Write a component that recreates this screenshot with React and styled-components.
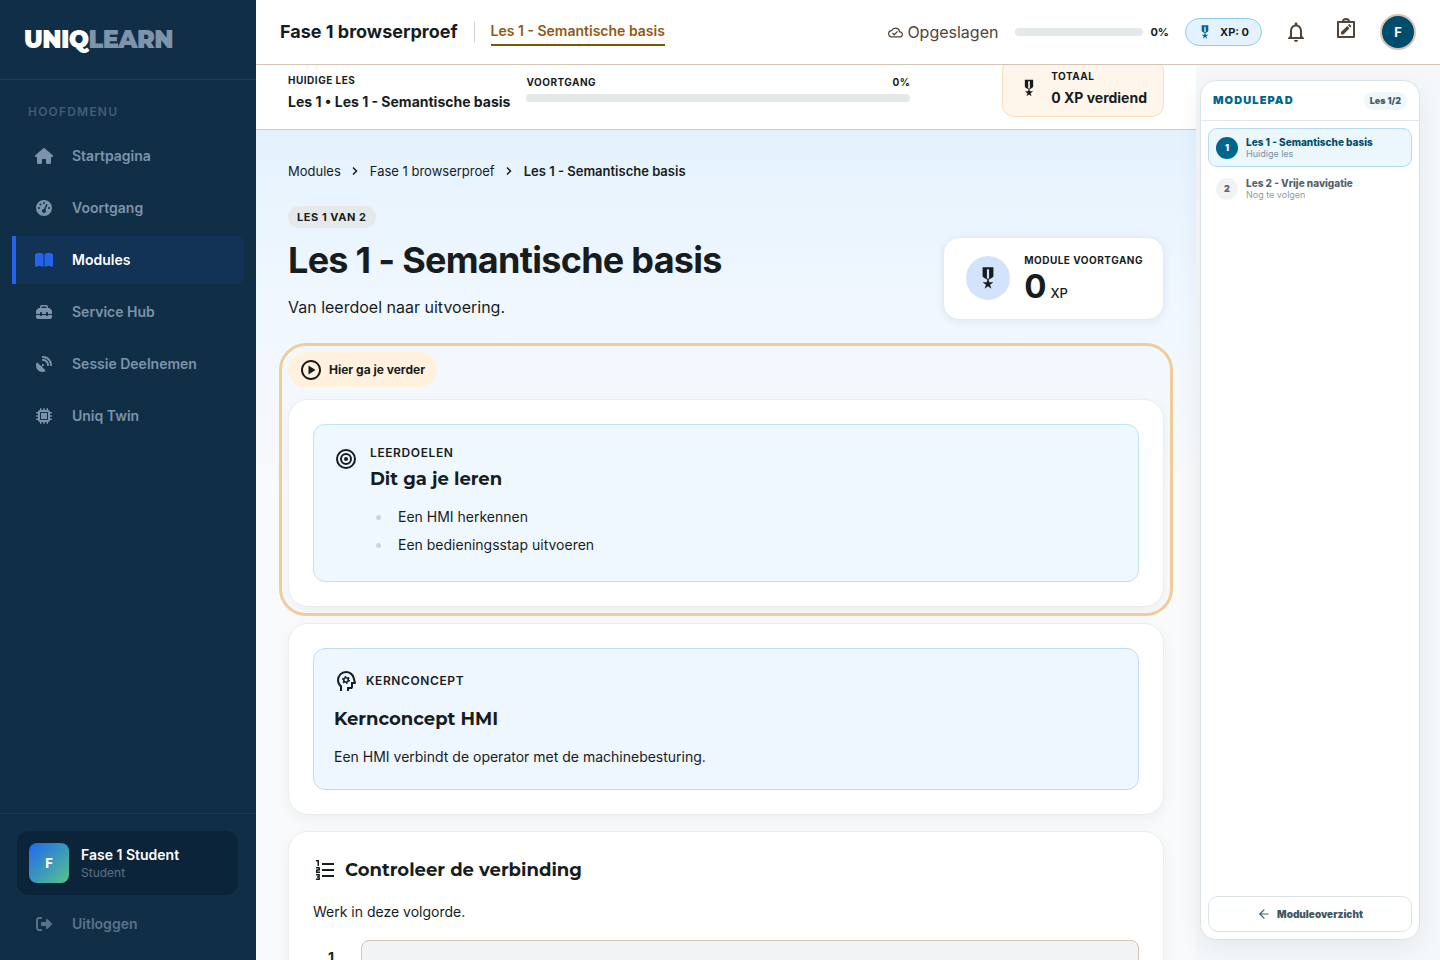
import React from "react";
import styled, { css, createGlobalStyle } from "styled-components";
import {
  FaHouse,
  FaGaugeHigh,
  FaBookOpen,
  FaToolbox,
  FaSatelliteDish,
  FaMicrochip,
  FaRightFromBracket,
} from "react-icons/fa6";
import { MdOutlineCloudDone, MdOutlineNotifications, MdOutlinePlayCircle } from "react-icons/md";
import { ArrowLeft } from "lucide-react";

const GlobalStyle = createGlobalStyle`
  * {
    box-sizing: border-box;
  }
  body {
    margin: 0;
    font-family: Inter, "Liberation Sans", sans-serif;
    color: #171d1e;
    background: #f6f9fb;
  }
  h1, h2, h3, p, ul, ol {
    margin: 0;
    padding: 0;
  }
  a {
    color: inherit;
    text-decoration: none;
  }
  button {
    font: inherit;
    color: inherit;
    border: 0;
    background: none;
    padding: 0;
    cursor: pointer;
  }
`;

const Shell = styled.div`
  display: flex;
  height: 100vh;
  overflow: hidden;
`;

/* sidebar */

const Sidebar = styled.aside`
  display: flex;
  flex-direction: column;
  flex: 0 0 256px;
  background: #112e47;
  color: #8094a8;
`;

const Logo = styled.div`
  height: 80px;
  padding: 0 24px;
  display: flex;
  align-items: center;
  border-bottom: 1px solid #1c3b56;
  font-family: Montserrat, Inter, sans-serif;
  font-size: 24px;
  font-weight: 900;
  letter-spacing: -0.025em;
  color: #ffffff;

  span {
    color: #7d94aa;
  }
`;

const MenuTitle = styled.div`
  padding: 22px 28px 10px;
  font-size: 12px;
  line-height: 20px;
  font-weight: 600;
  letter-spacing: 0.1em;
  color: #425d76;
`;

const Menu = styled.nav`
  display: flex;
  flex-direction: column;
  gap: 4px;
  padding: 0 12px;
`;

const MenuLink = styled.a`
  display: flex;
  align-items: center;
  gap: 16px;
  height: 48px;
  padding-left: 16px;
  border-left: 4px solid transparent;
  border-radius: 0 8px 8px 0;
  font-size: 14px;
  line-height: 20px;
  font-weight: 600;
  color: ${(props) => (props.$muted ? "#58728a" : "#7d93a9")};

  svg {
    width: 24px;
    height: 16px;
  }

  ${(props) =>
    props.$active &&
    css`
      background: #123256;
      border-left-color: #2563eb;
      color: #ffffff;

      svg {
        color: #2563eb;
      }
    `}
`;

const SidebarFooter = styled.div`
  margin-top: auto;
  border-top: 1px solid #1c3b56;
  padding: 17px 12px 12px;
`;

const Profile = styled.div`
  display: flex;
  align-items: center;
  gap: 12px;
  margin: 0 6px 5px 5px;
  padding: 12px;
  border-radius: 12px;
  background: #0c2439;
`;

const ProfileAvatar = styled.div`
  display: flex;
  align-items: center;
  justify-content: center;
  width: 40px;
  height: 40px;
  border-radius: 8px;
  background: linear-gradient(135deg, #2268ee, #55c48b);
  color: #ffffff;
  font-size: 13px;
  font-weight: 800;
`;

const ProfileName = styled.div`
  font-size: 14px;
  line-height: 20px;
  font-weight: 600;
  color: #ffffff;
`;

const ProfileRole = styled.div`
  font-size: 12px;
  line-height: 16px;
  color: #58728a;
`;

/* top bar */

const Page = styled.div`
  display: flex;
  flex-direction: column;
  flex: 1;
  min-width: 0;
`;

const TopBar = styled.header`
  position: relative;
  z-index: 2;
  display: flex;
  align-items: center;
  flex: 0 0 65px;
  padding: 0 24px;
  background: #ffffff;
  border-bottom: 1px solid #d9c3b2;
`;

const CourseTitle = styled.div`
  padding-right: 16px;
  border-right: 1px solid #d9d0c8;
  font-size: 18px;
  line-height: 20px;
  font-weight: 700;
`;

const CourseTab = styled.a`
  margin-left: 16px;
  border-bottom: 2px solid #7f5700;
  font-size: 14px;
  line-height: 26px;
  font-weight: 600;
  color: #8f5a14;
`;

const TopActions = styled.div`
  display: flex;
  align-items: center;
  margin-left: auto;
`;

const SaveState = styled.div`
  display: flex;
  align-items: center;
  gap: 4px;
  margin-right: 17px;
  font-size: 16px;
  color: #51453a;

  svg {
    width: 15px;
    height: 15px;
  }
`;

const Track = styled.div`
  height: 8px;
  width: ${(props) => props.$width || "100%"};
  border-radius: 4px;
  background: #e5e8e8;
`;

const TrackValue = styled.span`
  margin: 0 16px 0 7px;
  font-size: 11px;
  font-weight: 700;
`;

const XpChip = styled.div`
  display: flex;
  align-items: center;
  gap: 7px;
  height: 28px;
  padding: 0 12px 0 11px;
  border: 1px solid #8ccdf0;
  border-radius: 14px;
  background: #e3f2fe;
  font-size: 11px;
  font-weight: 700;

  svg {
    width: 16px;
    height: 16px;
    color: #00658d;
  }
`;

const IconButton = styled.button`
  display: flex;
  margin-left: 22px;
  color: #51453a;

  svg {
    width: 24px;
    height: 24px;
  }
`;

const NotesButton = styled(IconButton)`
  margin-left: 26px;
  padding-bottom: 6px;
`;

const UserButton = styled.button`
  width: 36px;
  height: 36px;
  margin-left: 22px;
  border: 2px solid #d9c3b2;
  border-radius: 50%;
  background: #004c6b;
  color: #ffffff;
  font-size: 13px;
  font-weight: 700;
`;

/* lesson column */

const Body = styled.div`
  display: flex;
  flex: 1;
  min-height: 0;
`;

const Lesson = styled.main`
  flex: 1;
  min-width: 0;
  min-height: 0;
  overflow: hidden;
  background: linear-gradient(#e4f2fd 64px, #f0f7ff 240px, #f8fafb 420px);
`;

const LessonBar = styled.div`
  display: flex;
  align-items: center;
  gap: 16px;
  margin-top: -18px;
  padding: 12px 32px;
  background: #ffffff;
  border-bottom: 1px solid #d9c3b2;
`;

const Eyebrow = styled.div`
  font-size: ${(props) => (props.$large ? "12px" : "10px")};
  line-height: 16px;
  font-weight: ${(props) => (props.$large ? 600 : 700)};
  letter-spacing: 0.05em;
  text-transform: uppercase;
`;

const BarLesson = styled.div`
  padding-top: 7px;
`;

const BarValue = styled.div`
  margin-top: 4px;
  font-size: 14px;
  line-height: 20px;
  font-weight: 700;
`;

const BarProgress = styled.div`
  width: 384px;
`;

const BarProgressTop = styled.div`
  display: flex;
  justify-content: space-between;
  margin-bottom: 4px;
`;

const TotalCard = styled.div`
  display: flex;
  align-items: center;
  gap: 12px;
  margin-left: auto;
  padding: 8px 16px;
  border: 1px solid #fbdcba;
  border-radius: 12px;
  background: #fff6eb;

  svg {
    width: 20px;
    height: 24px;
  }
`;

const Content = styled.div`
  display: flex;
  flex-direction: column;
  padding: 31px 32px;
`;

const Breadcrumbs = styled.nav`
  display: flex;
  align-items: center;
  gap: 10px;
  font-size: 13px;
  line-height: 20px;

  svg {
    width: 9px;
    height: 10px;
  }

  b {
    font-weight: 600;
  }
`;

const Hero = styled.div`
  display: flex;
  align-items: flex-end;
  justify-content: space-between;
  margin: 24px 0 32px;
`;

const LessonChip = styled.span`
  display: inline-block;
  padding: 0 9px;
  border-radius: 11px;
  background: #e5e9e9;
  font-size: 11px;
  line-height: 22px;
  font-weight: 700;
  letter-spacing: 0.05em;
`;

const Title = styled.h1`
  margin: 10px 0 12px;
  font-size: 36px;
  line-height: 44px;
  font-weight: 700;
  letter-spacing: -0.02em;
`;

const Lead = styled.p`
  font-size: 16px;
  line-height: 26px;
`;

const XpCard = styled.div`
  display: flex;
  align-items: center;
  gap: 14px;
  padding: 14px 20px 15px 22px;
  border: 1px solid #e4eaee;
  border-radius: 16px;
  background: #ffffff;
  box-shadow: 0 2px 8px rgba(15, 40, 60, 0.08);
`;

const XpBadge = styled.div`
  display: flex;
  align-items: center;
  justify-content: center;
  width: 44px;
  height: 44px;
  border-radius: 50%;
  background: #d3e3fe;

  svg {
    width: 26px;
    height: 26px;
  }
`;

const XpAmount = styled.div`
  display: flex;
  align-items: baseline;
  gap: 4px;
  font-size: 33px;
  line-height: 36px;
  font-weight: 700;

  small {
    font-size: 13px;
    line-height: 16px;
    font-weight: 500;
  }
`;

const Sections = styled.div`
  display: flex;
  flex-direction: column;
  gap: 16px;
`;

const CurrentSection = styled.section`
  border-radius: 18px;
  outline: 3px solid #f0cc98;
  outline-offset: 6px;
`;

const ResumePill = styled.div`
  display: flex;
  align-items: center;
  gap: 6px;
  width: fit-content;
  height: 35px;
  margin-bottom: 12px;
  padding: 0 12px 0 11px;
  border-radius: 18px;
  background: #fff1de;
  font-size: 12px;
  font-weight: 700;

  svg {
    width: 24px;
    height: 24px;
  }
`;

const Card = styled.div`
  padding: 24px;
  border: 1px solid #eaeeee;
  border-radius: 20px;
  background: #ffffff;
  box-shadow: 0 4px 14px rgba(15, 40, 60, 0.05);
`;

const Panel = styled.div`
  padding: 20px;
  border: 1px solid ${(props) => (props.$tone === "goal" ? "#bae6f5" : "#bfdbf5")};
  border-radius: 12px;
  background: ${(props) => (props.$tone === "goal" ? "#f0f8ff" : "#eef6ff")};

  svg {
    width: 24px;
    height: 24px;
    flex: none;
  }
`;

const GoalRow = styled.div`
  display: flex;
  gap: 12px;

  > svg {
    margin-top: 2px;
  }
`;

const Heading = styled.h2`
  font-family: Montserrat, Inter, sans-serif;
  font-size: 18px;
  line-height: 28px;
  font-weight: 700;
`;

const GoalHeading = styled(Heading)`
  margin-top: 4px;
`;

const GoalList = styled.ul`
  margin: 10px 0 2px;
  list-style: none;
`;

const GoalItem = styled.li`
  display: flex;
  align-items: center;
  gap: 17px;
  padding-left: 6px;
  font-size: 14px;
  line-height: 28px;

  &::before {
    content: "";
    width: 5px;
    height: 5px;
    border-radius: 50%;
    background: #cbd5e1;
  }
`;

const LabelRow = styled.div`
  display: flex;
  align-items: center;
  gap: 8px;
  margin-bottom: 12px;
`;

const Text = styled.p`
  margin-top: ${(props) => (props.$spaced ? "16px" : "12px")};
  font-size: 14px;
  line-height: 24px;
`;

const StepHeading = styled.div`
  display: flex;
  align-items: center;
  gap: 8px;

  svg {
    width: 24px;
    height: 24px;
  }
`;

const StepList = styled.ol`
  margin-top: 16px;
  list-style: none;
`;

const Step = styled.li`
  display: flex;
  gap: 12px;
`;

const StepNumber = styled.div`
  width: 36px;
  padding-top: 8px;
  text-align: center;
  font-size: 14px;
  line-height: 20px;
  font-weight: 700;
`;

const StepBox = styled.div`
  flex: 1;
  min-height: 96px;
  border: 1px solid #d9c3b2;
  border-radius: 8px;
  background: #f2f3f4;
`;

/* module path */

const Rail = styled.aside`
  display: flex;
  flex: 0 0 244px;
  padding: 15px 20px 20px 4px;
  background: #f5f8fa;
`;

const Path = styled.div`
  display: flex;
  flex-direction: column;
  flex: 1;
  min-width: 0;
  border: 1px solid #dce3e8;
  border-radius: 16px;
  background: #ffffff;
  box-shadow: 0 8px 24px rgba(15, 40, 60, 0.07);
`;

const PathHeader = styled.div`
  display: flex;
  align-items: center;
  justify-content: space-between;
  height: 40px;
  padding: 0 12px;
  border-bottom: 1px solid #e2e8ea;
`;

const PathTitle = styled.h3`
  font-size: 11px;
  line-height: 15px;
  font-weight: 900;
  letter-spacing: 0.1em;
  color: #00658d;
`;

const PathCount = styled.span`
  padding: 0 6px;
  border-radius: 9px;
  background: #f0f7fa;
  font-size: 9px;
  line-height: 18px;
  font-weight: 900;
  color: #475c6b;
`;

const PathList = styled.div`
  display: flex;
  flex-direction: column;
  gap: 2px;
  padding: 7px;
`;

const PathLink = styled.a`
  display: flex;
  align-items: center;
  gap: 8px;
  height: 39px;
  padding: 0 7px;
  border: 1px solid ${(props) => (props.$active ? "#b5dcea" : "transparent")};
  border-radius: 9px;
  background: ${(props) => (props.$active ? "#ebf6fd" : "transparent")};
  color: ${(props) => (props.$active ? "#004c6b" : "#51616e")};
`;

const PathNumber = styled.span`
  display: flex;
  align-items: center;
  justify-content: center;
  width: 22px;
  height: 22px;
  border-radius: 50%;
  background: ${(props) => (props.$active ? "#00658d" : "#f0f2f3")};
  color: ${(props) => (props.$active ? "#ffffff" : "#5b6478")};
  font-size: 9px;
  font-weight: 900;
`;

const PathName = styled.div`
  font-size: 10px;
  line-height: 13px;
  font-weight: 800;
`;

const PathStatus = styled.div`
  font-size: 9px;
  line-height: 10px;
  color: ${(props) => (props.$active ? "#7392a3" : "#8f9ba5")};
`;

const OverviewLink = styled.a`
  display: flex;
  align-items: center;
  justify-content: center;
  gap: 6px;
  height: 36px;
  margin: auto 7px 7px;
  border: 1px solid #dce3e5;
  border-radius: 10px;
  font-size: 10px;
  line-height: 14px;
  font-weight: 900;
  color: #3f5866;
`;

const MedalIcon = () => (
  <svg viewBox="0 -960 960 960" fill="currentColor" fillRule="evenodd" aria-hidden="true">
    <path d="M280-880h400v314q0 23-10 41t-28 29l-142 84 28 92h152l-124 88 48 152-124-94-124 94 48-152-124-88h152l28-92-142-84q-18-11-28-29t-10-41v-314Zm160 80v327l40 24 40-24v-327h-80Z" />
  </svg>
);

const PsychologyIcon = () => (
  <svg viewBox="0 -960 960 960" fill="currentColor" aria-hidden="true">
    <path d="M240-80v-172q-57-52-88.500-121.500T120-520q0-150 105-255t255-105q125 0 221.500 73.500T827-615l52 205q5 19-7 34.500T840-360h-80v120q0 33-23.500 56.500T680-160h-80v80h-80v-160h160v-200h108l-38-155q-23-91-98-148t-172-57q-116 0-197 81t-81 197q0 60 24.500 114t69.500 96l26 24v208h-80Z" />
    <circle cx="480" cy="-520" r="90" fill="none" stroke="currentColor" strokeWidth="64" />
    <circle cx="480" cy="-520" r="138" fill="none" stroke="currentColor" strokeWidth="48" strokeDasharray="66 78.500" />
  </svg>
);

const NumberedListIcon = () => (
  <svg viewBox="0 -960 960 960" fill="currentColor" aria-hidden="true">
    <path d="M120-80v-60h100v-30h-60v-60h60v-30H120v-60h120q17 0 28.500 11.500T280-280v40q0 17-11.500 28.500T240-200q17 0 28.500 11.500T280-160v40q0 17-11.500 28.500T240-80H120Zm0-280v-110q0-17 11.500-28.500T160-510h60v-30H120v-60h120q17 0 28.500 11.500T280-560v70q0 17-11.500 28.500T240-450h-60v30h100v60H120Zm60-280v-180h-60v-60h120v240h-60Zm180 440v-80h480v80H360Zm0-240v-80h480v80H360Zm0-240v-80h480v80H360Z" />
  </svg>
);

const ClipboardEditIcon = () => (
  <svg viewBox="0 0 24 24" fill="none" stroke="currentColor" strokeWidth="2" aria-hidden="true">
    <path d="M4 5h16v15H4z" strokeLinejoin="round" />
    <path d="M9 4.500a3 2.500 0 0 1 6 0" />
    <path d="M7 17.500v-2.400l6.200-6.200 2.400 2.400-6.200 6.200z" fill="currentColor" stroke="none" />
    <path d="M13.900 8.200l.9-.9q.4-.4.8 0l1.600 1.600q.4.4 0 .8l-.9.9z" fill="currentColor" stroke="none" />
  </svg>
);

const TargetIcon = () => (
  <svg viewBox="0 0 24 24" fill="none" stroke="currentColor" strokeWidth="2" aria-hidden="true">
    <circle cx="12" cy="12" r="9" />
    <circle cx="12" cy="12" r="5" />
    <circle cx="12" cy="12" r="2" fill="currentColor" stroke="none" />
  </svg>
);

const Chevron = () => (
  <svg viewBox="0 0 9 10" fill="none" stroke="currentColor" strokeWidth="1.5" aria-hidden="true">
    <path d="M2 1.500L5.500 5 2 8.500" />
  </svg>
);

const menu = [
  { label: "Startpagina", icon: FaHouse },
  { label: "Voortgang", icon: FaGaugeHigh },
  { label: "Modules", icon: FaBookOpen, active: true },
  { label: "Service Hub", icon: FaToolbox },
  { label: "Sessie Deelnemen", icon: FaSatelliteDish },
  { label: "Uniq Twin", icon: FaMicrochip },
];

const lessons = [
  { name: "Les 1 - Semantische basis", status: "Huidige les", active: true },
  { name: "Les 2 - Vrije navigatie", status: "Nog te volgen" },
];

const goals = ["Een HMI herkennen", "Een bedieningsstap uitvoeren"];

const App = () => {
  return (
    <Shell>
      <GlobalStyle />
      <Sidebar>
        <Logo>
          UNIQ<span>LEARN</span>
        </Logo>
        <MenuTitle>HOOFDMENU</MenuTitle>
        <Menu>
          {menu.map(({ label, icon: Icon, active }) => (
            <MenuLink key={label} href="#" $active={active}>
              <Icon />
              {label}
            </MenuLink>
          ))}
        </Menu>
        <SidebarFooter>
          <Profile>
            <ProfileAvatar>F</ProfileAvatar>
            <div>
              <ProfileName>Fase 1 Student</ProfileName>
              <ProfileRole>Student</ProfileRole>
            </div>
          </Profile>
          <MenuLink href="#" $muted>
            <FaRightFromBracket />
            Uitloggen
          </MenuLink>
        </SidebarFooter>
      </Sidebar>

      <Page>
        <TopBar>
          <CourseTitle>Fase 1 browserproef</CourseTitle>
          <CourseTab href="#">Les 1 - Semantische basis</CourseTab>
          <TopActions>
            <SaveState>
              <MdOutlineCloudDone />
              Opgeslagen
            </SaveState>
            <Track $width="128px" />
            <TrackValue>0%</TrackValue>
            <XpChip>
              <MedalIcon />
              XP: 0
            </XpChip>
            <IconButton aria-label="Meldingen">
              <MdOutlineNotifications />
            </IconButton>
            <NotesButton aria-label="Notities">
              <ClipboardEditIcon />
            </NotesButton>
            <UserButton>F</UserButton>
          </TopActions>
        </TopBar>

        <Body>
          <Lesson>
            <LessonBar>
              <BarLesson>
                <Eyebrow>Huidige les</Eyebrow>
                <BarValue>Les 1 • Les 1 - Semantische basis</BarValue>
              </BarLesson>
              <BarProgress>
                <BarProgressTop>
                  <Eyebrow>Voortgang</Eyebrow>
                  <Eyebrow>0%</Eyebrow>
                </BarProgressTop>
                <Track />
              </BarProgress>
              <TotalCard>
                <MedalIcon />
                <div>
                  <Eyebrow>Totaal</Eyebrow>
                  <BarValue>0 XP verdiend</BarValue>
                </div>
              </TotalCard>
            </LessonBar>

            <Content>
              <Breadcrumbs>
                <a href="#">Modules</a>
                <Chevron />
                <a href="#">Fase 1 browserproef</a>
                <Chevron />
                <b>Les 1 - Semantische basis</b>
              </Breadcrumbs>

              <Hero>
                <div>
                  <LessonChip>LES 1 VAN 2</LessonChip>
                  <Title>Les 1 - Semantische basis</Title>
                  <Lead>Van leerdoel naar uitvoering.</Lead>
                </div>
                <XpCard>
                  <XpBadge>
                    <MedalIcon />
                  </XpBadge>
                  <div>
                    <Eyebrow>Module voortgang</Eyebrow>
                    <XpAmount>
                      0<small>XP</small>
                    </XpAmount>
                  </div>
                </XpCard>
              </Hero>

              <Sections>
                <CurrentSection>
                  <ResumePill>
                    <MdOutlinePlayCircle />
                    Hier ga je verder
                  </ResumePill>
                  <Card>
                    <Panel $tone="goal">
                      <GoalRow>
                        <TargetIcon />
                        <div>
                          <Eyebrow $large>Leerdoelen</Eyebrow>
                          <GoalHeading>Dit ga je leren</GoalHeading>
                          <GoalList>
                            {goals.map((goal) => (
                              <GoalItem key={goal}>{goal}</GoalItem>
                            ))}
                          </GoalList>
                        </div>
                      </GoalRow>
                    </Panel>
                  </Card>
                </CurrentSection>

                <Card>
                  <Panel>
                    <LabelRow>
                      <PsychologyIcon />
                      <Eyebrow $large>Kernconcept</Eyebrow>
                    </LabelRow>
                    <Heading>Kernconcept HMI</Heading>
                    <Text>Een HMI verbindt de operator met de machinebesturing.</Text>
                  </Panel>
                </Card>

                <Card>
                  <StepHeading>
                    <NumberedListIcon />
                    <Heading>Controleer de verbinding</Heading>
                  </StepHeading>
                  <Text $spaced>Werk in deze volgorde.</Text>
                  <StepList>
                    <Step>
                      <StepNumber>1</StepNumber>
                      <StepBox />
                    </Step>
                  </StepList>
                </Card>
              </Sections>
            </Content>
          </Lesson>

          <Rail>
            <Path>
              <PathHeader>
                <PathTitle>MODULEPAD</PathTitle>
                <PathCount>Les 1/2</PathCount>
              </PathHeader>
              <PathList>
                {lessons.map((lesson, index) => (
                  <PathLink key={lesson.name} href="#" $active={lesson.active}>
                    <PathNumber $active={lesson.active}>{index + 1}</PathNumber>
                    <div>
                      <PathName>{lesson.name}</PathName>
                      <PathStatus $active={lesson.active}>{lesson.status}</PathStatus>
                    </div>
                  </PathLink>
                ))}
              </PathList>
              <OverviewLink href="#">
                <ArrowLeft size={14} />
                Moduleoverzicht
              </OverviewLink>
            </Path>
          </Rail>
        </Body>
      </Page>
    </Shell>
  );
};

export default App;
